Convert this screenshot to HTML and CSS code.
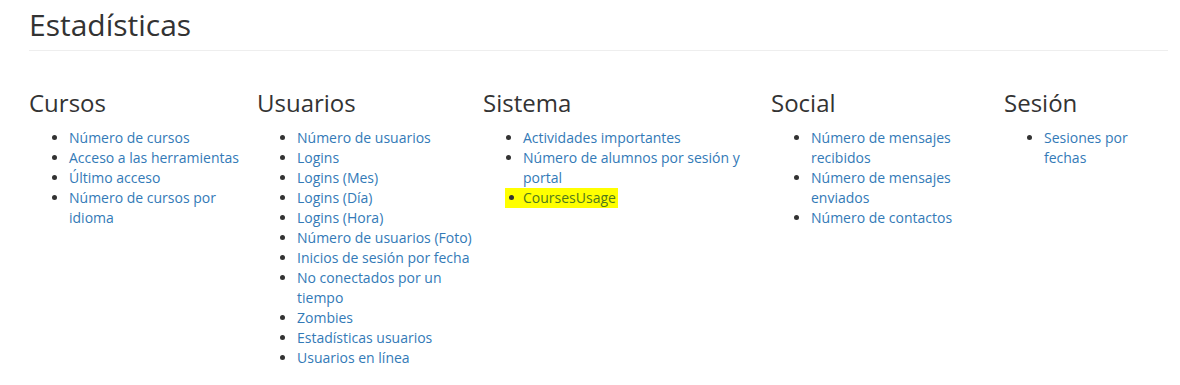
FILE: index.html
```html
<!DOCTYPE html>
<html lang="es">
<head>
<meta charset="utf-8">
<title>Estadísticas</title>
<link rel="stylesheet" href="styles.css">
</head>
<body>
<div class="page">
  <div class="page-header">
    <h1 class="title">Estadísticas</h1>
  </div>
  <div class="sections">
    <div class="section">
      <h3 class="section-title">Cursos</h3>
      <ul class="links">
        <li><a href="#">Número de cursos</a></li>
        <li><a href="#">Acceso a las herramientas</a></li>
        <li><a href="#">Último acceso</a></li>
        <li><a href="#">Número de cursos por idioma</a></li>
      </ul>
    </div>
    <div class="section">
      <h3 class="section-title">Usuarios</h3>
      <ul class="links">
        <li><a href="#">Número de usuarios</a></li>
        <li><a href="#">Logins</a></li>
        <li><a href="#">Logins (Mes)</a></li>
        <li><a href="#">Logins (Día)</a></li>
        <li><a href="#">Logins (Hora)</a></li>
        <li><a href="#">Número de usuarios (Foto)</a></li>
        <li><a href="#">Inicios de sesión por fecha</a></li>
        <li><a href="#">No conectados por un tiempo</a></li>
        <li><a href="#">Zombies</a></li>
        <li><a href="#">Estadísticas usuarios</a></li>
        <li><a href="#">Usuarios en línea</a></li>
      </ul>
    </div>
    <div class="section">
      <h3 class="section-title">Sistema</h3>
      <ul class="links">
        <li><a href="#">Actividades importantes</a></li>
        <li><a href="#">Número de alumnos por sesión y portal</a></li>
        <li class="hl"><span class="hl-mark"><a href="#">CoursesUsage</a></span></li>
      </ul>
    </div>
    <div class="section">
      <h3 class="section-title">Social</h3>
      <ul class="links">
        <li><a href="#">Número de mensajes recibidos</a></li>
        <li><a href="#">Número de mensajes enviados</a></li>
        <li><a href="#">Número de contactos</a></li>
      </ul>
    </div>
    <div class="section">
      <h3 class="section-title">Sesión</h3>
      <ul class="links">
        <li><a href="#">Sesiones por fechas</a></li>
      </ul>
    </div>
  </div>
</div>
</body>
</html>
```

FILE: styles.css
```css
html, body {
  margin: 0;
  padding: 0;
  background: #fff;
}

body {
  font-family: "Open Sans", "DejaVu Sans", sans-serif;
  font-size: 14px;
  line-height: 20px;
  color: #333;
}

.page {
  padding: 0 12px 0 29px;
}

.page-header {
  padding-bottom: 9px;
  border-bottom: 1px solid #eee;
}

.title {
  margin: 8px 0 0 0;
  font-size: 30px;
  line-height: 33px;
  font-weight: 400;
  color: #333;
}

.sections {
  display: grid;
  grid-template-columns: 228px 226px 288px 233px 1fr;
  margin-top: 38px;
}

.section-title {
  margin: 0 0 12px 0;
  font-size: 24px;
  line-height: 27px;
  font-weight: 400;
  color: #333;
}

.links {
  margin: 0;
  padding-left: 40px;
  list-style: disc;
}

.links a {
  color: #337ab7;
  text-decoration: none;
}

.links li.hl {
  list-style: none;
}

.hl-mark {
  display: inline-block;
  margin-left: -18px;
  padding: 0 2px 0 4px;
  line-height: 20px;
  background: #ffff00;
}

.hl-mark::before {
  content: "";
  display: inline-block;
  width: 5px;
  height: 5px;
  border-radius: 50%;
  background: #333;
  margin-right: 9px;
  vertical-align: 3px;
}

.hl-mark a {
  color: #4f7a1c;
}
```
